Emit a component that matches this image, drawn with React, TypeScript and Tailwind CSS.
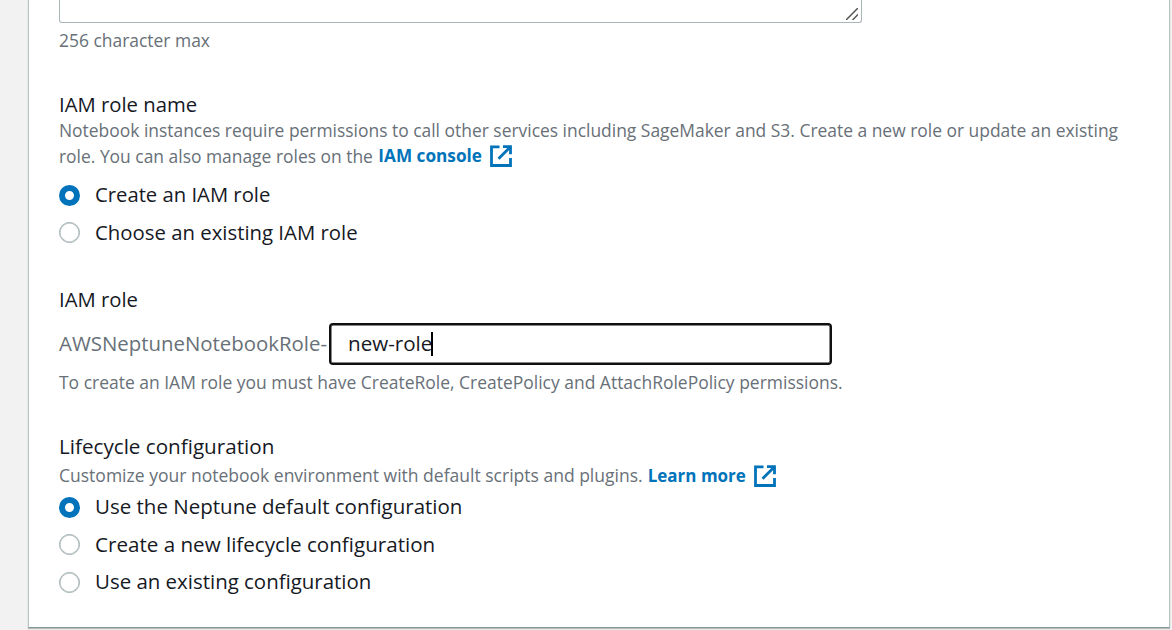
import type { ReactNode } from 'react';

function ExternalIcon() {
  return (
    <svg className="ml-2 block h-[22px] w-[22px] shrink-0" viewBox="0 0 22 22" fill="none" stroke="#0073bb" strokeWidth="2.8">
      <path d="M9.500 1.9H1.5v18.6h19V13" />
      <path d="M13 1.7h7.500v7.500M20 2.2L8.5 13.7" />
    </svg>
  );
}

function Link({ children, className }: { children: ReactNode; className: string }) {
  return (
    <a className="flex items-center font-bold text-[#0073bb]">
      <span className={className}>{children}</span>
      <ExternalIcon />
    </a>
  );
}

function Radio({ label, checked = false, className }: { label: string; checked?: boolean; className: string }) {
  return (
    <label className="flex h-[37.5px] items-center text-[#16191f]">
      <span
        className={
          checked
            ? 'mr-[15px] h-[21px] w-[21px] rounded-full border-[6.5px] border-[#0073bb] bg-white'
            : 'mr-[15px] h-[21px] w-[21px] rounded-full border border-[#9fadae] bg-white shadow-[inset_0_0_0_0.5px_#aab7b8]'
        }
      />
      <span className={className}>{label}</span>
    </label>
  );
}

export default function App() {
  return (
    <div className="flex h-[630px] w-[1172px] overflow-hidden bg-[#f2f2f2] pl-7 font-['Open_Sans',sans-serif] whitespace-nowrap">
      <main className="h-[628px] w-[1142px] border-x border-b border-[#b9c2c2] border-b-[#879596] bg-white pl-[30px] shadow-[0_1px_1px_#b5bdbd]">
        <div className="flex h-[23px] w-[803px] items-end justify-end rounded-b-[3px] border border-t-0 border-[#aab7b8] pr-[3px] pb-[2px]">
          <svg className="h-3 w-3" viewBox="0 0 12 12" stroke="#555" strokeWidth="1.5">
            <path d="M0 12L12 0M6.500 12L12 6.500" />
          </svg>
        </div>
        <p className="flex h-9 items-center pb-[2px] text-[17.45px] text-[#687078]"><span>256 character max</span></p>

        <h2 className="mt-[33px] flex h-[26px] items-center pb-[2px] text-[20.3px] text-[#16191f]"><span>IAM role name</span></h2>
        <div className="text-[17.43px] leading-[25px] text-[#687078]">
          <p className="flex h-[25px]"><span>Notebook instances require permissions to call other services including SageMaker and S3. Create a new role or update an existing</span></p>
          <div className="flex h-[25px]">
            <span className="mt-px mr-[5.5px]">role. You can also manage roles on the</span>
            <Link className="text-[17.2px]">IAM console</Link>
          </div>
        </div>
        <div className="mt-[8.5px]">
          <Radio checked label="Create an IAM role" className="pb-[2px] text-[20.25px]" />
          <Radio label="Choose an existing IAM role" className="pb-[0.8px] text-[20.35px]" />
        </div>

        <h2 className="mt-[35.500px] flex h-[26px] items-center pb-[2px] text-[20.3px] text-[#16191f]"><span>IAM role</span></h2>
        <div className="mt-[10px] flex h-[42px] items-center">
          <span className="w-[270px] pb-[2px] text-[20.4px] text-[#687078]">AWSNeptuneNotebookRole-</span>
          <div className="flex h-[42px] w-[503px] items-center rounded-[4px] border-2 border-[#101010] pl-[17px] text-[20.6px] text-[#16191f] shadow-[inset_0_0_0_0.5px_#101010]">
            <span className="pb-[2px]">new-role</span>
            <i className="-ml-px h-6 w-[2px] bg-black" />
          </div>
        </div>
        <p className="flex h-9 items-center pb-[2px] text-[17.48px] text-[#687078]"><span>To create an IAM role you must have CreateRole, CreatePolicy and AttachRolePolicy permissions.</span></p>

        <h2 className="mt-[33px] flex h-[26px] items-center pb-[2px] text-[20.65px] text-[#16191f]"><span>Lifecycle configuration</span></h2>
        <div className="mt-[3px] flex h-[25px] items-center text-[17.52px] text-[#687078]">
          <span className="mr-[5px]">Customize your notebook environment with default scripts and plugins.</span>
          <Link className="text-[17px]">Learn more</Link>
        </div>
        <div className="mt-[0.5px]">
          <Radio checked label="Use the Neptune default configuration" className="pb-px text-[20.5px]" />
          <Radio label="Create a new lifecycle configuration" className="pb-px text-[20.6px]" />
          <Radio label="Use an existing configuration" className="pb-px text-[20.45px]" />
        </div>
      </main>
    </div>
  );
}
